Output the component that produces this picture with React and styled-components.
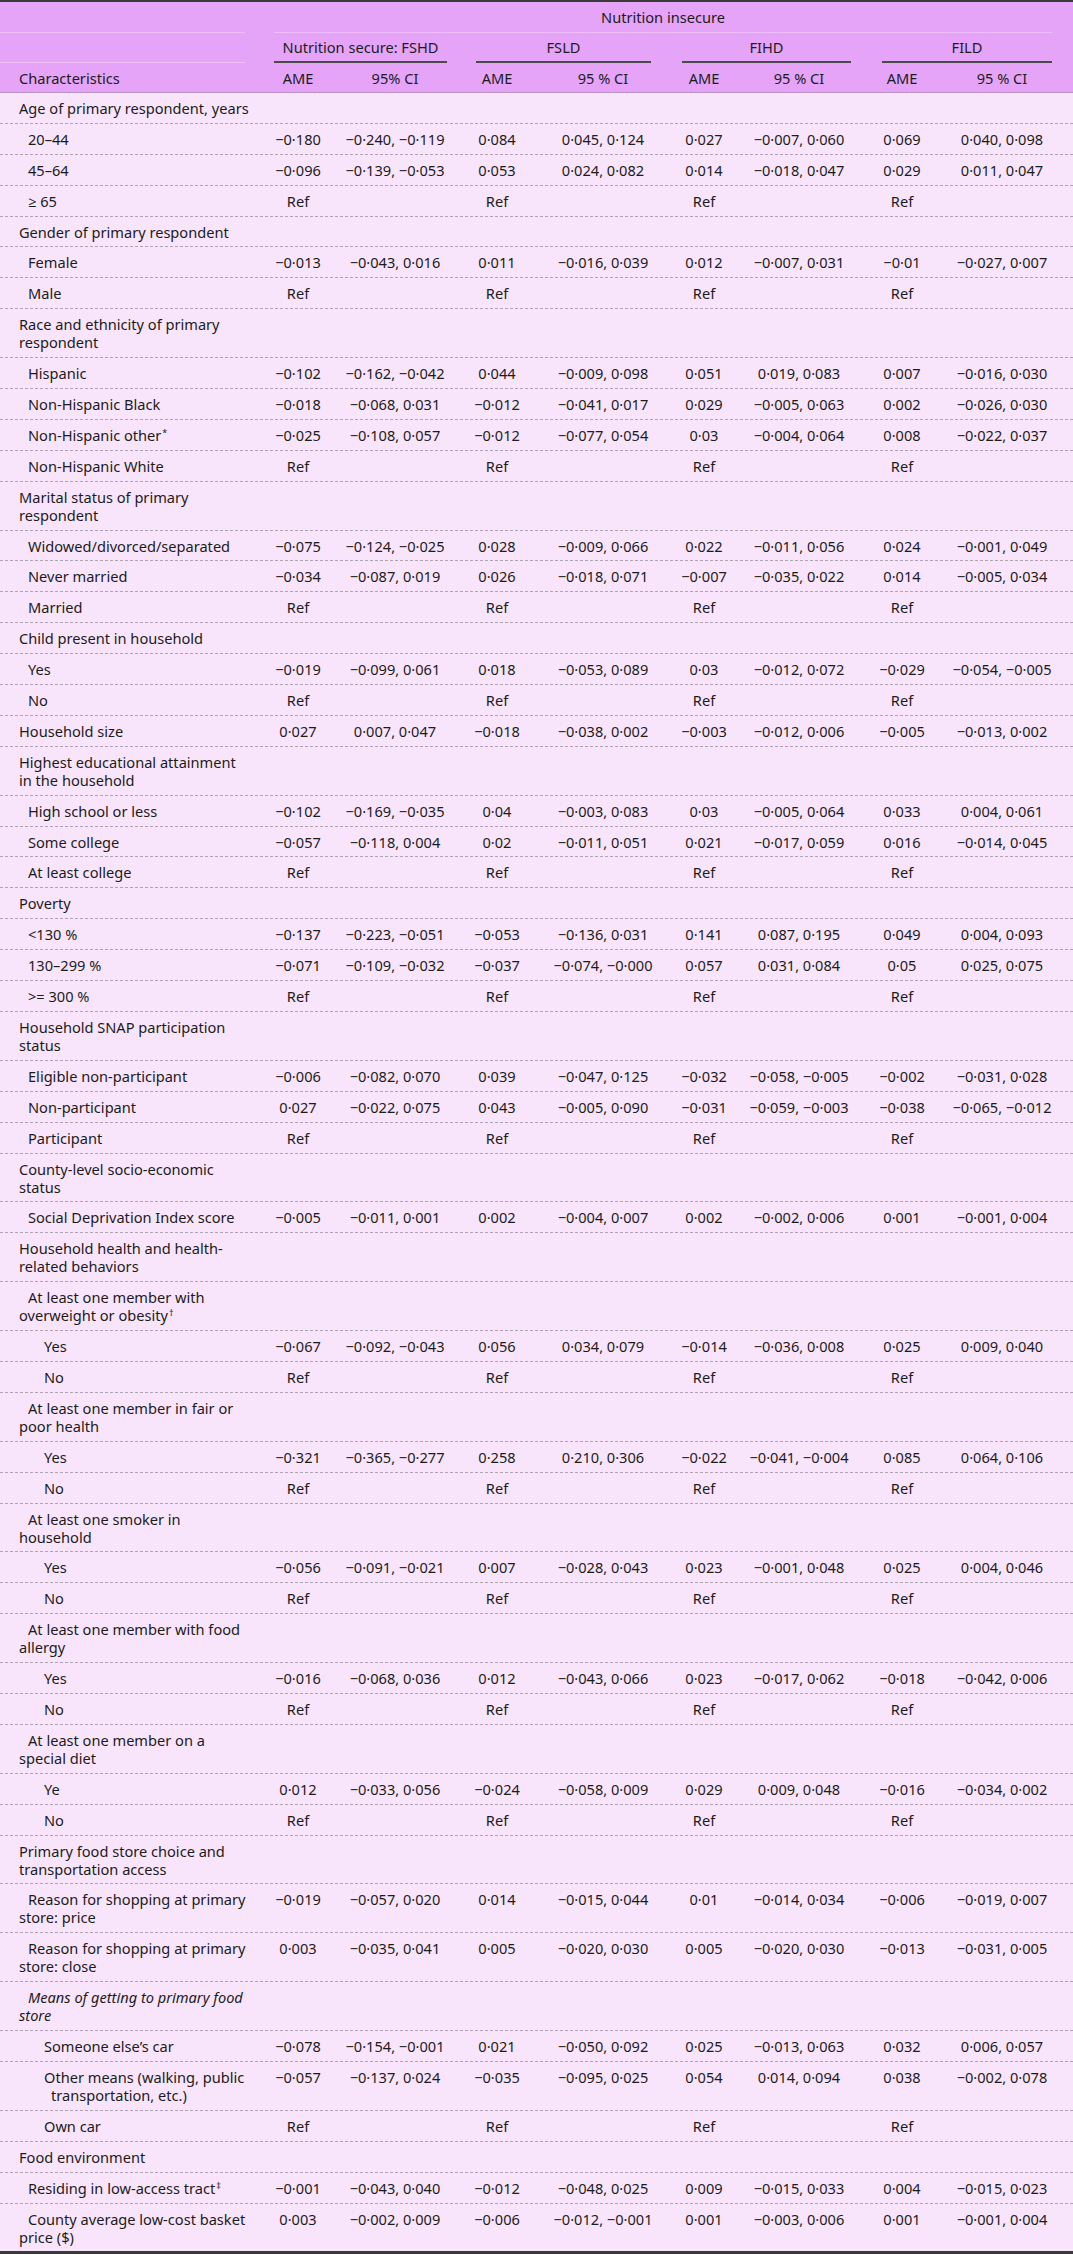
import React from 'react';
import styled, { createGlobalStyle } from 'styled-components';

const COLS = '264px 68px 126px 78px 134px 68px 122px 84px 116px 1fr';
const FONT = "'Noto Sans', 'Open Sans', sans-serif";

const GlobalStyle = createGlobalStyle`
  html, body { margin: 0; padding: 0; background: #ffffff; }
  body {
    font-family: ${FONT};
    color: #1c1c1c;
  }
`;

const Table = styled.div`
  width: 1073px;
  border-top: 2px solid #3a3a3a;
  border-bottom: 3px solid #3a3a3a;
  background: #f9e5fb;
  font-family: ${FONT};
  font-size: 14.6px;
`;

const Head = styled.div`
  background: #e5a4f8;
  border-bottom: 1px solid #b893c4;
`;

const HeadRow = styled.div`
  display: grid;
  grid-template-columns: ${COLS};
  height: ${(p) => p.$h}px;
`;

const RULES = {
  none: 'none',
  light: '1px solid #efbdfa',
  dark: '2px solid #4a4a4a',
};

const HeadCell = styled.div`
  grid-column: ${(p) => p.$col || 'auto'};
  display: flex;
  align-items: center;
  justify-content: ${(p) => (p.$left ? 'flex-start' : 'center')};
  margin: 0 ${(p) => p.$mr || 0}px 0 ${(p) => p.$ml || 0}px;
  padding-left: ${(p) => (p.$left ? 19 : 0)}px;
  border-bottom: ${(p) => RULES[p.$rule || 'none']};
  font-size: 14.6px;
  line-height: 18px;
  white-space: nowrap;
`;

const Row = styled.div`
  display: grid;
  grid-template-columns: ${COLS};
  border-bottom: 1px dashed #aea3b1;
  &:last-child { border-bottom: none; }
`;

const LEVEL_PAD = [19, 19, 44];
const LEVEL_INDENT = [0, 9, 0];

const Label = styled.div`
  padding: 6px 8px 5.9px ${(p) => (p.$hang ? 51 : LEVEL_PAD[p.$level])}px;
  text-indent: ${(p) => (p.$hang ? -7 : LEVEL_INDENT[p.$level])}px;
  font-size: 14.6px;
  line-height: 18px;
  white-space: nowrap;
  font-style: ${(p) => (p.$italic ? 'italic' : 'normal')};
`;

const Num = styled.div`
  padding: 6px 0 5.9px;
  font-size: 14.6px;
  line-height: 18px;
  text-align: center;
  white-space: nowrap;
`;

const Sup = styled.sup`
  font-size: 9px;
  line-height: 0;
  vertical-align: 5px;
  margin-left: 1px;
`;

const REF = ['Ref', '', 'Ref', '', 'Ref', '', 'Ref', ''];

const rows = [
  { l: ['Age of primary respondent, years'], lv: 0 },
  { l: ['20–44'], lv: 1, v: ['−0·180', '−0·240, −0·119', '0·084', '0·045, 0·124', '0·027', '−0·007, 0·060', '0·069', '0·040, 0·098'] },
  { l: ['45–64'], lv: 1, v: ['−0·096', '−0·139, −0·053', '0·053', '0·024, 0·082', '0·014', '−0·018, 0·047', '0·029', '0·011, 0·047'] },
  { l: ['≥ 65'], lv: 1, v: REF },
  { l: ['Gender of primary respondent'], lv: 0 },
  { l: ['Female'], lv: 1, v: ['−0·013', '−0·043, 0·016', '0·011', '−0·016, 0·039', '0·012', '−0·007, 0·031', '−0·01', '−0·027, 0·007'] },
  { l: ['Male'], lv: 1, v: REF },
  { l: ['Race and ethnicity of primary', 'respondent'], lv: 0 },
  { l: ['Hispanic'], lv: 1, v: ['−0·102', '−0·162, −0·042', '0·044', '−0·009, 0·098', '0·051', '0·019, 0·083', '0·007', '−0·016, 0·030'] },
  { l: ['Non-Hispanic Black'], lv: 1, v: ['−0·018', '−0·068, 0·031', '−0·012', '−0·041, 0·017', '0·029', '−0·005, 0·063', '0·002', '−0·026, 0·030'] },
  { l: [<>Non-Hispanic other<Sup>*</Sup></>], lv: 1, v: ['−0·025', '−0·108, 0·057', '−0·012', '−0·077, 0·054', '0·03', '−0·004, 0·064', '0·008', '−0·022, 0·037'] },
  { l: ['Non-Hispanic White'], lv: 1, v: REF },
  { l: ['Marital status of primary', 'respondent'], lv: 0 },
  { l: ['Widowed/divorced/separated'], lv: 1, v: ['−0·075', '−0·124, −0·025', '0·028', '−0·009, 0·066', '0·022', '−0·011, 0·056', '0·024', '−0·001, 0·049'] },
  { l: ['Never married'], lv: 1, v: ['−0·034', '−0·087, 0·019', '0·026', '−0·018, 0·071', '−0·007', '−0·035, 0·022', '0·014', '−0·005, 0·034'] },
  { l: ['Married'], lv: 1, v: REF },
  { l: ['Child present in household'], lv: 0 },
  { l: ['Yes'], lv: 1, v: ['−0·019', '−0·099, 0·061', '0·018', '−0·053, 0·089', '0·03', '−0·012, 0·072', '−0·029', '−0·054, −0·005'] },
  { l: ['No'], lv: 1, v: REF },
  { l: ['Household size'], lv: 0, v: ['0·027', '0·007, 0·047', '−0·018', '−0·038, 0·002', '−0·003', '−0·012, 0·006', '−0·005', '−0·013, 0·002'] },
  { l: ['Highest educational attainment', 'in the household'], lv: 0 },
  { l: ['High school or less'], lv: 1, v: ['−0·102', '−0·169, −0·035', '0·04', '−0·003, 0·083', '0·03', '−0·005, 0·064', '0·033', '0·004, 0·061'] },
  { l: ['Some college'], lv: 1, v: ['−0·057', '−0·118, 0·004', '0·02', '−0·011, 0·051', '0·021', '−0·017, 0·059', '0·016', '−0·014, 0·045'] },
  { l: ['At least college'], lv: 1, v: REF },
  { l: ['Poverty'], lv: 0 },
  { l: ['<130 %'], lv: 1, v: ['−0·137', '−0·223, −0·051', '−0·053', '−0·136, 0·031', '0·141', '0·087, 0·195', '0·049', '0·004, 0·093'] },
  { l: ['130–299 %'], lv: 1, v: ['−0·071', '−0·109, −0·032', '−0·037', '−0·074, −0·000', '0·057', '0·031, 0·084', '0·05', '0·025, 0·075'] },
  { l: ['>= 300 %'], lv: 1, v: REF },
  { l: ['Household SNAP participation', 'status'], lv: 0 },
  { l: ['Eligible non-participant'], lv: 1, v: ['−0·006', '−0·082, 0·070', '0·039', '−0·047, 0·125', '−0·032', '−0·058, −0·005', '−0·002', '−0·031, 0·028'] },
  { l: ['Non-participant'], lv: 1, v: ['0·027', '−0·022, 0·075', '0·043', '−0·005, 0·090', '−0·031', '−0·059, −0·003', '−0·038', '−0·065, −0·012'] },
  { l: ['Participant'], lv: 1, v: REF },
  { l: ['County-level socio-economic', 'status'], lv: 0 },
  { l: ['Social Deprivation Index score'], lv: 1, v: ['−0·005', '−0·011, 0·001', '0·002', '−0·004, 0·007', '0·002', '−0·002, 0·006', '0·001', '−0·001, 0·004'] },
  { l: ['Household health and health-', 'related behaviors'], lv: 0 },
  { l: ['At least one member with', <>overweight or obesity<Sup>†</Sup></>], lv: 1 },
  { l: ['Yes'], lv: 2, v: ['−0·067', '−0·092, −0·043', '0·056', '0·034, 0·079', '−0·014', '−0·036, 0·008', '0·025', '0·009, 0·040'] },
  { l: ['No'], lv: 2, v: REF },
  { l: ['At least one member in fair or', 'poor health'], lv: 1 },
  { l: ['Yes'], lv: 2, v: ['−0·321', '−0·365, −0·277', '0·258', '0·210, 0·306', '−0·022', '−0·041, −0·004', '0·085', '0·064, 0·106'] },
  { l: ['No'], lv: 2, v: REF },
  { l: ['At least one smoker in', 'household'], lv: 1 },
  { l: ['Yes'], lv: 2, v: ['−0·056', '−0·091, −0·021', '0·007', '−0·028, 0·043', '0·023', '−0·001, 0·048', '0·025', '0·004, 0·046'] },
  { l: ['No'], lv: 2, v: REF },
  { l: ['At least one member with food', 'allergy'], lv: 1 },
  { l: ['Yes'], lv: 2, v: ['−0·016', '−0·068, 0·036', '0·012', '−0·043, 0·066', '0·023', '−0·017, 0·062', '−0·018', '−0·042, 0·006'] },
  { l: ['No'], lv: 2, v: REF },
  { l: ['At least one member on a', 'special diet'], lv: 1 },
  { l: ['Ye'], lv: 2, v: ['0·012', '−0·033, 0·056', '−0·024', '−0·058, 0·009', '0·029', '0·009, 0·048', '−0·016', '−0·034, 0·002'] },
  { l: ['No'], lv: 2, v: REF },
  { l: ['Primary food store choice and', 'transportation access'], lv: 0 },
  { l: ['Reason for shopping at primary', 'store: price'], lv: 1, v: ['−0·019', '−0·057, 0·020', '0·014', '−0·015, 0·044', '0·01', '−0·014, 0·034', '−0·006', '−0·019, 0·007'] },
  { l: ['Reason for shopping at primary', 'store: close'], lv: 1, v: ['0·003', '−0·035, 0·041', '0·005', '−0·020, 0·030', '0·005', '−0·020, 0·030', '−0·013', '−0·031, 0·005'] },
  { l: ['Means of getting to primary food', 'store'], lv: 1, italic: true },
  { l: ['Someone else’s car'], lv: 2, v: ['−0·078', '−0·154, −0·001', '0·021', '−0·050, 0·092', '0·025', '−0·013, 0·063', '0·032', '0·006, 0·057'] },
  { l: ['Other means (walking, public', 'transportation, etc.)'], lv: 2, hang: true, v: ['−0·057', '−0·137, 0·024', '−0·035', '−0·095, 0·025', '0·054', '0·014, 0·094', '0·038', '−0·002, 0·078'] },
  { l: ['Own car'], lv: 2, v: REF },
  { l: ['Food environment'], lv: 0 },
  { l: [<>Residing in low-access tract<Sup>‡</Sup></>], lv: 1, v: ['−0·001', '−0·043, 0·040', '−0·012', '−0·048, 0·025', '0·009', '−0·015, 0·033', '0·004', '−0·015, 0·023'] },
  { l: ['County average low-cost basket', 'price ($)'], lv: 1, v: ['0·003', '−0·002, 0·009', '−0·006', '−0·012, −0·001', '0·001', '−0·003, 0·006', '0·001', '−0·001, 0·004'] },
];

const EMPTY = ['', '', '', '', '', '', '', ''];

const groups = [
  { name: 'Nutrition secure: FSHD', col: '2 / 4', ml: 10, mr: 11, ci: '95% CI' },
  { name: 'FSLD', col: '4 / 6', ml: 18, mr: 19, ci: '95 % CI' },
  { name: 'FIHD', col: '6 / 8', ml: 12, mr: 9, ci: '95 % CI' },
  { name: 'FILD', col: '8 / 10', ml: 22, mr: 8, ci: '95 % CI' },
];

function LabelText({ lines }) {
  return lines.map((line, i) => (
    <React.Fragment key={i}>
      {i > 0 && <br />}
      {line}
    </React.Fragment>
  ));
}

export default function App() {
  return (
    <>
      <GlobalStyle />
      <Table>
        <Head>
          <HeadRow $h={31}>
            <HeadCell $col="1 / 2" $rule="light" $mr={19} />
            <HeadCell $col="2 / 10" $rule="light" $ml={10} $mr={8}>Nutrition insecure</HeadCell>
          </HeadRow>
          <HeadRow $h={30}>
            <HeadCell $col="1 / 2" $rule="light" $mr={19} />
            {groups.map((g) => (
              <HeadCell key={g.name} $col={g.col} $rule="dark" $ml={g.ml} $mr={g.mr}>
                {g.name}
              </HeadCell>
            ))}
          </HeadRow>
          <HeadRow $h={29}>
            <HeadCell $left>Characteristics</HeadCell>
            {groups.map((g) => (
              <React.Fragment key={g.name}>
                <HeadCell>AME</HeadCell>
                <HeadCell>{g.ci}</HeadCell>
              </React.Fragment>
            ))}
          </HeadRow>
        </Head>
        {rows.map((r, i) => (
          <Row key={i}>
            <Label $level={r.lv} $italic={r.italic} $hang={r.hang}>
              <LabelText lines={r.l} />
            </Label>
            {(r.v || EMPTY).map((v, j) => (
              <Num key={j}>{v}</Num>
            ))}
          </Row>
        ))}
      </Table>
    </>
  );
}
